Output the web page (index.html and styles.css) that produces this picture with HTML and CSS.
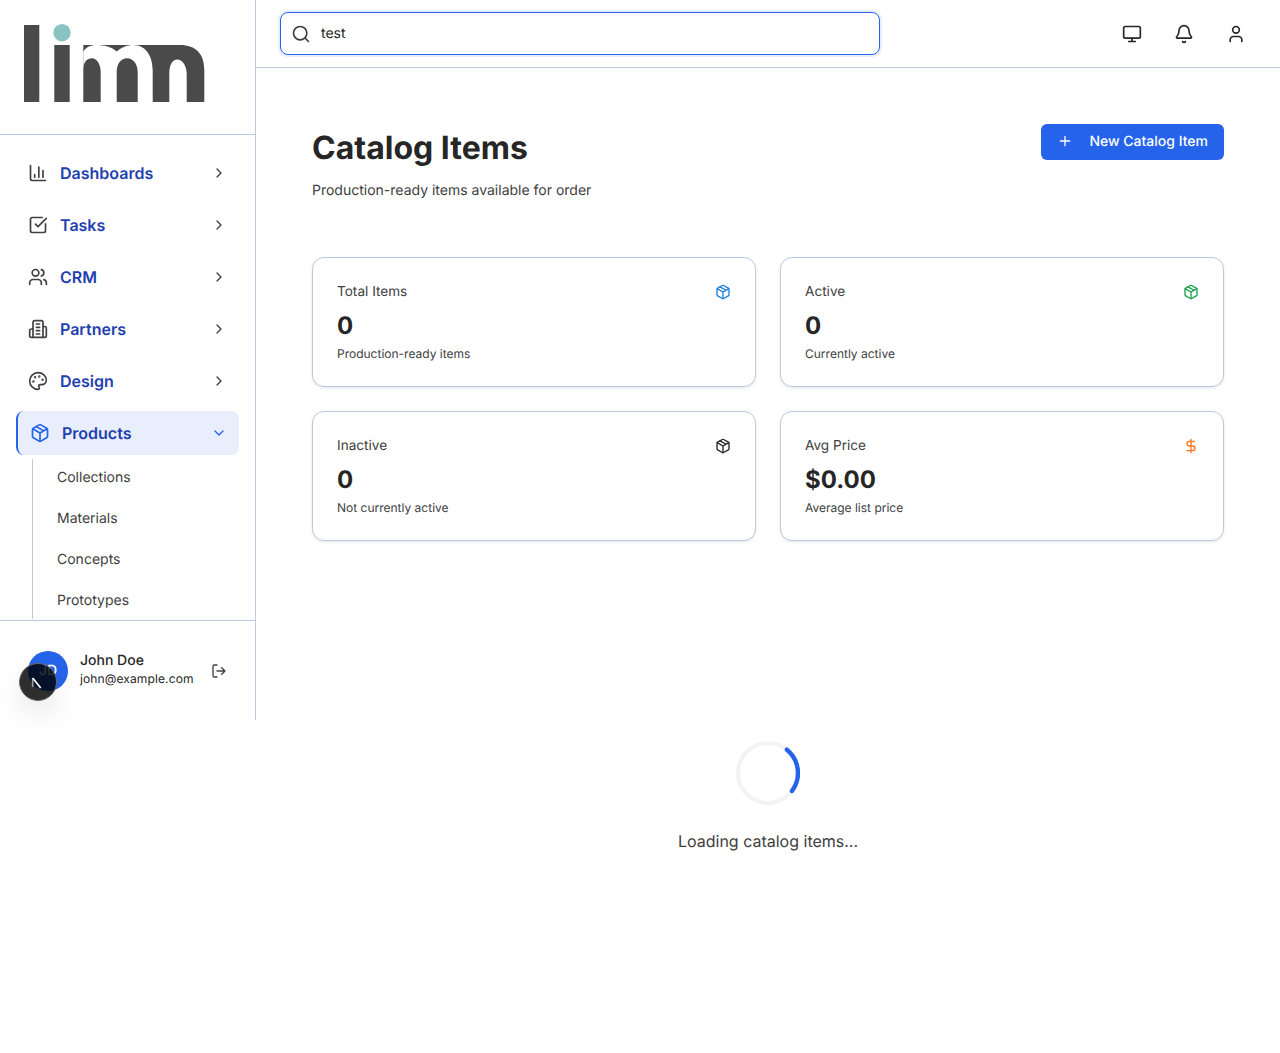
FILE: index.html
```html
<!DOCTYPE html>
<html lang="en">
<head>
<meta charset="utf-8">
<title>Catalog Items</title>
<link rel="stylesheet" href="styles.css">
</head>
<body>
<div class="app">
  <aside class="sidebar">
    <div class="brand">
      <svg class="logo" width="181" height="78" viewBox="0 0 181 78">
        <rect x="0" y="1" width="15.3" height="77" fill="#4a4a4a"/>
        <circle cx="38" cy="8.7" r="8.7" fill="#86c3c1"/>
        <rect x="30.3" y="21" width="15.4" height="57" fill="#4a4a4a"/>
        <path d="M59.3 21H156C172 21 180.3 30 180.3 46V78H162.7V50C162.7 41 158 35.5 153.5 35.5C148 35.5 145.3 41 145.3 50V78H59.3Z" fill="#4a4a4a"/>
        <path d="M76.7 78V48C76.7 40 72.5 34.3 68 34.3C63 34.3 59.3 38 59.3 46V27.7C62 23 67 21 72 21C80 21 88 23 92.7 27.5C98 23 104 21 109 21C122 21 128.7 32 128.7 47V78H113.7V48C113.7 40 109 34.3 103 34.3C97 34.3 92.7 40 92.7 48V78Z" fill="#fff"/>
      </svg>
    </div>
    <nav class="nav">
      <a class="nav-item"><svg class="ico" viewBox="0 0 24 24"><path d="M3 3v16a2 2 0 0 0 2 2h16M8 17v-3M13 17V5M18 17V9"/></svg><span class="nav-label">Dashboards</span><svg class="chev" viewBox="0 0 24 24"><path d="m9 18 6-6-6-6"/></svg></a>
      <a class="nav-item"><svg class="ico" viewBox="0 0 24 24"><path d="M21 10.7V19a2 2 0 0 1-2 2H5a2 2 0 0 1-2-2V5a2 2 0 0 1 2-2h12"/><path d="m9 11 3 3L22 4"/></svg><span class="nav-label">Tasks</span><svg class="chev" viewBox="0 0 24 24"><path d="m9 18 6-6-6-6"/></svg></a>
      <a class="nav-item"><svg class="ico" viewBox="0 0 24 24"><path d="M16 21v-2a4 4 0 0 0-4-4H6a4 4 0 0 0-4 4v2"/><circle cx="9" cy="7" r="4"/><path d="M22 21v-2a4 4 0 0 0-3-3.87M16 3.13a4 4 0 0 1 0 7.75"/></svg><span class="nav-label">CRM</span><svg class="chev" viewBox="0 0 24 24"><path d="m9 18 6-6-6-6"/></svg></a>
      <a class="nav-item"><svg class="ico" viewBox="0 0 24 24"><path d="M6 22V4a2 2 0 0 1 2-2h8a2 2 0 0 1 2 2v18z"/><path d="M6 12H4a2 2 0 0 0-2 2v6a2 2 0 0 0 2 2h2M18 9h2a2 2 0 0 1 2 2v9a2 2 0 0 1-2 2h-2M10 6h4M10 10h4M10 14h4M10 18h4"/></svg><span class="nav-label">Partners</span><svg class="chev" viewBox="0 0 24 24"><path d="m9 18 6-6-6-6"/></svg></a>
      <a class="nav-item"><svg class="ico" viewBox="0 0 24 24"><circle cx="13.5" cy="6.5" r=".5" fill="currentColor"/><circle cx="17.5" cy="10.5" r=".5" fill="currentColor"/><circle cx="8.5" cy="7.5" r=".5" fill="currentColor"/><circle cx="6.5" cy="12.5" r=".5" fill="currentColor"/><path d="M12 2C6.5 2 2 6.5 2 12s4.5 10 10 10c.926 0 1.648-.746 1.648-1.688 0-.437-.18-.835-.437-1.125-.29-.289-.438-.652-.438-1.125a1.64 1.64 0 0 1 1.668-1.668h1.996c3.051 0 5.555-2.503 5.555-5.554C21.965 6.012 17.461 2 12 2z"/></svg><span class="nav-label">Design</span><svg class="chev" viewBox="0 0 24 24"><path d="m9 18 6-6-6-6"/></svg></a>
      <a class="nav-item active"><svg class="ico" viewBox="0 0 24 24"><path d="M21 8a2 2 0 0 0-1-1.73l-7-4a2 2 0 0 0-2 0l-7 4A2 2 0 0 0 3 8v8a2 2 0 0 0 1 1.73l7 4a2 2 0 0 0 2 0l7-4A2 2 0 0 0 21 16z"/><path d="m3.3 7 8.7 5 8.7-5M12 22V12M7.5 4.27l9 5.15"/></svg><span class="nav-label">Products</span><svg class="chev" viewBox="0 0 24 24"><path d="m6 9 6 6 6-6"/></svg></a>
      <div class="subnav">
        <a class="sub-item">Collections</a>
        <a class="sub-item">Materials</a>
        <a class="sub-item">Concepts</a>
        <a class="sub-item">Prototypes</a>
      </div>
    </nav>
    <div class="user">
      <div class="avatar">JD</div>
      <div class="user-text">
        <div class="user-name">John Doe</div>
        <div class="user-mail">john@example.com</div>
      </div>
      <svg class="logout" viewBox="0 0 24 24"><path d="M9 21H5a2 2 0 0 1-2-2V5a2 2 0 0 1 2-2h4M16 17l5-5-5-5M21 12H9"/></svg>
    </div>
  </aside>
  <div class="main">
    <header class="topbar">
      <label class="search">
        <svg class="search-ico" viewBox="0 0 24 24"><circle cx="11" cy="11" r="8"/><path d="m21 21-4.3-4.3"/></svg>
        <span class="search-text">test</span>
      </label>
      <div class="top-actions">
        <span class="top-btn"><svg class="top-ico" viewBox="0 0 24 24"><rect x="2" y="3" width="20" height="14" rx="2"/><path d="M8 21h8M12 17v4"/></svg></span>
        <span class="top-btn"><svg class="top-ico" viewBox="0 0 24 24"><path d="M10.268 21a2 2 0 0 0 3.464 0"/><path d="M3.262 15.326A1 1 0 0 0 4 17h16a1 1 0 0 0 .74-1.673C19.41 13.956 18 12.499 18 8A6 6 0 0 0 6 8c0 4.499-1.411 5.956-2.738 7.326"/></svg></span>
        <span class="top-btn"><svg class="top-ico" viewBox="0 0 24 24"><path d="M19 21v-2a4 4 0 0 0-4-4H9a4 4 0 0 0-4 4v2"/><circle cx="12" cy="7" r="4"/></svg></span>
      </div>
    </header>
    <main class="content">
      <div class="page-head">
        <div>
          <h1 class="title">Catalog Items</h1>
          <p class="subtitle">Production-ready items available for order</p>
        </div>
        <a class="primary"><svg class="plus" viewBox="0 0 24 24"><path d="M5 12h14M12 5v14"/></svg>New Catalog Item</a>
      </div>
      <section class="stats">
        <article class="card">
          <div class="card-top"><span class="card-label">Total Items</span><svg class="card-ico c-blue" viewBox="0 0 24 24"><path d="M21 8a2 2 0 0 0-1-1.73l-7-4a2 2 0 0 0-2 0l-7 4A2 2 0 0 0 3 8v8a2 2 0 0 0 1 1.73l7 4a2 2 0 0 0 2 0l7-4A2 2 0 0 0 21 16z"/><path d="m3.3 7 8.7 5 8.7-5M12 22V12M7.5 4.27l9 5.15"/></svg></div>
          <div class="card-value">0</div>
          <div class="card-desc">Production-ready items</div>
        </article>
        <article class="card">
          <div class="card-top"><span class="card-label">Active</span><svg class="card-ico c-green" viewBox="0 0 24 24"><path d="M21 8a2 2 0 0 0-1-1.73l-7-4a2 2 0 0 0-2 0l-7 4A2 2 0 0 0 3 8v8a2 2 0 0 0 1 1.73l7 4a2 2 0 0 0 2 0l7-4A2 2 0 0 0 21 16z"/><path d="m3.3 7 8.7 5 8.7-5M12 22V12M7.5 4.27l9 5.15"/></svg></div>
          <div class="card-value">0</div>
          <div class="card-desc">Currently active</div>
        </article>
        <article class="card">
          <div class="card-top"><span class="card-label">Inactive</span><svg class="card-ico c-dark" viewBox="0 0 24 24"><path d="M21 8a2 2 0 0 0-1-1.73l-7-4a2 2 0 0 0-2 0l-7 4A2 2 0 0 0 3 8v8a2 2 0 0 0 1 1.73l7 4a2 2 0 0 0 2 0l7-4A2 2 0 0 0 21 16z"/><path d="m3.3 7 8.7 5 8.7-5M12 22V12M7.5 4.27l9 5.15"/></svg></div>
          <div class="card-value">0</div>
          <div class="card-desc">Not currently active</div>
        </article>
        <article class="card">
          <div class="card-top"><span class="card-label">Avg Price</span><svg class="card-ico c-orange" viewBox="0 0 24 24"><path d="M12 2v20M17 5H9.5a3.5 3.5 0 0 0 0 7h5a3.5 3.5 0 0 1 0 7H6"/></svg></div>
          <div class="card-value">$0.00</div>
          <div class="card-desc">Average list price</div>
        </article>
      </section>
      <div class="loading">
        <svg class="spinner" viewBox="0 0 64 64"><circle class="spin-track" cx="32" cy="32" r="30"/><path class="spin-arc" d="M50.9 8.7A30 30 0 0 1 55.9 50"/></svg>
        <p class="loading-text">Loading catalog items...</p>
      </div>
    </main>
  </div>
</div>
<div class="dev-badge"><svg class="dev-n" viewBox="0 0 20 20"><path class="dev-stem" d="M4.7 6v9"/><path d="M4.7 6l8 10"/></svg></div>
</body>
</html>
```
FILE: styles.css
```css
* { box-sizing: border-box; }
html, body { margin: 0; padding: 0; background: #fff; }
body { font-family: Inter, "Liberation Sans", sans-serif; color: #262626; height: 1053px; position: relative; text-rendering: geometricPrecision; }
svg { fill: none; stroke: currentColor; stroke-width: 2; stroke-linecap: round; stroke-linejoin: round; flex: none; display: block; }
p, h1 { margin: 0; }
.app { display: flex; align-items: flex-start; }

.sidebar { width: 256px; height: 720px; flex: none; border-right: 1px solid #bccadf; display: flex; flex-direction: column; }
.brand { height: 135px; flex: none; border-bottom: 1px solid #bccadf; padding: 24px 0 0 24px; }
.logo { stroke: none; }
.nav { flex: 1; min-height: 0; overflow: hidden; padding: 16px 16px 0; display: flex; flex-direction: column; gap: 8px; }
.nav-item { height: 44px; flex: none; display: flex; align-items: center; gap: 12px; padding: 0 12px; border-radius: 8px; font-size: 16px; font-weight: 600; color: #1e40af; }
.nav-label { flex: 1; }
.ico { width: 20px; height: 20px; color: #404040; }
.chev { width: 16px; height: 16px; color: #404040; }
.nav-item.active { background: #e8eefc; border-left: 2px solid #2563eb; }
.nav-item.active .ico, .nav-item.active .chev { color: #2563eb; }
.subnav { margin: -4px 0 0 16px; border-left: 1px solid #bccadf; padding-left: 12px; display: flex; flex-direction: column; gap: 4px; flex: none; }
.sub-item { height: 37px; flex: none; display: flex; align-items: center; padding-left: 12px; font-size: 14px; color: #404040; }

.user { height: 100px; flex: none; border-top: 1px solid #bccadf; display: flex; align-items: center; padding: 0 28px; gap: 12px; }
.avatar { width: 40px; height: 40px; flex: none; border-radius: 50%; background: #2563eb; color: #fff; display: flex; align-items: center; justify-content: center; font-size: 14px; font-weight: 500; }
.user-text { flex: 1; min-width: 0; white-space: nowrap; padding-bottom: 4px; }
.user-name { font-size: 14px; line-height: 20px; font-weight: 500; color: #262626; }
.user-mail { font-size: 12px; line-height: 16px; letter-spacing: .01em; color: #262626; }
.logout { width: 16px; height: 16px; color: #404040; }

.main { flex: 1; min-width: 0; }
.topbar { height: 68px; border-bottom: 1px solid #bccadf; display: flex; align-items: center; justify-content: space-between; padding: 0 24px; }
.search { width: 600px; height: 43px; border: 1px solid #2563eb; border-radius: 8px; box-shadow: 0 0 0 2px #e6edfb; display: flex; align-items: center; gap: 10px; padding: 0 10px; font-size: 14px; color: #262626; }
.search-ico { width: 20px; height: 20px; color: #404040; }
.top-actions { display: flex; gap: 12px; }
.top-btn { width: 40px; height: 40px; display: flex; align-items: center; justify-content: center; }
.top-ico { width: 20px; height: 20px; color: #262626; }

.content { padding: 56px 56px 0; }
.page-head { display: flex; justify-content: space-between; align-items: flex-start; }
.title { font-size: 32px; line-height: 48px; font-weight: 700; color: #262626; }
.subtitle { margin-top: 8px; font-size: 14px; line-height: 22px; color: #404040; }
.primary { height: 36px; display: flex; align-items: center; gap: 16px; padding: 0 16px 2px; border-radius: 6px; background: #2563eb; color: #fff; font-size: 14px; font-weight: 500; }
.plus { width: 16px; height: 16px; }

.stats { margin-top: 55px; display: grid; grid-template-columns: 1fr 1fr; gap: 24px; }
.card { height: 130px; border: 1px solid #bccadf; border-radius: 12px; padding: 24px; box-shadow: 0 1px 3px rgba(0,0,0,.1); background: #fff; }
.card-top { display: flex; justify-content: space-between; align-items: center; height: 20px; }
.card-label { font-size: 13.6px; color: #404040; }
.card-ico { width: 16px; height: 16px; }
.c-blue { color: #1e7fe0; }
.c-green { color: #16a34a; }
.c-dark { color: #262626; }
.c-orange { color: #f97316; }
.card-value { margin-top: 8px; font-size: 24px; line-height: 32px; font-weight: 700; color: #262626; }
.card-desc { margin-top: 4px; font-size: 12px; line-height: 16px; color: #404040; }

.loading { margin-top: 200px; display: flex; flex-direction: column; align-items: center; }
.spinner { width: 64px; height: 64px; }
.spin-track { stroke: #f1f3f6; stroke-width: 4; }
.spin-arc { stroke: #2563eb; stroke-width: 4.4; }
.loading-text { margin-top: 24px; font-size: 16px; line-height: 24px; color: #404040; }

.dev-badge { position: absolute; left: 19px; top: 663px; width: 38px; height: 38px; border-radius: 50%; background: rgba(0,0,0,.82); border: 1px solid #666; box-shadow: 0 14px 28px rgba(0,0,0,.09); display: flex; align-items: center; justify-content: center; }
.dev-n { width: 20px; height: 20px; color: #fff; stroke-width: 1.7; stroke-linecap: butt; }
.dev-stem { stroke: #999; }
```
